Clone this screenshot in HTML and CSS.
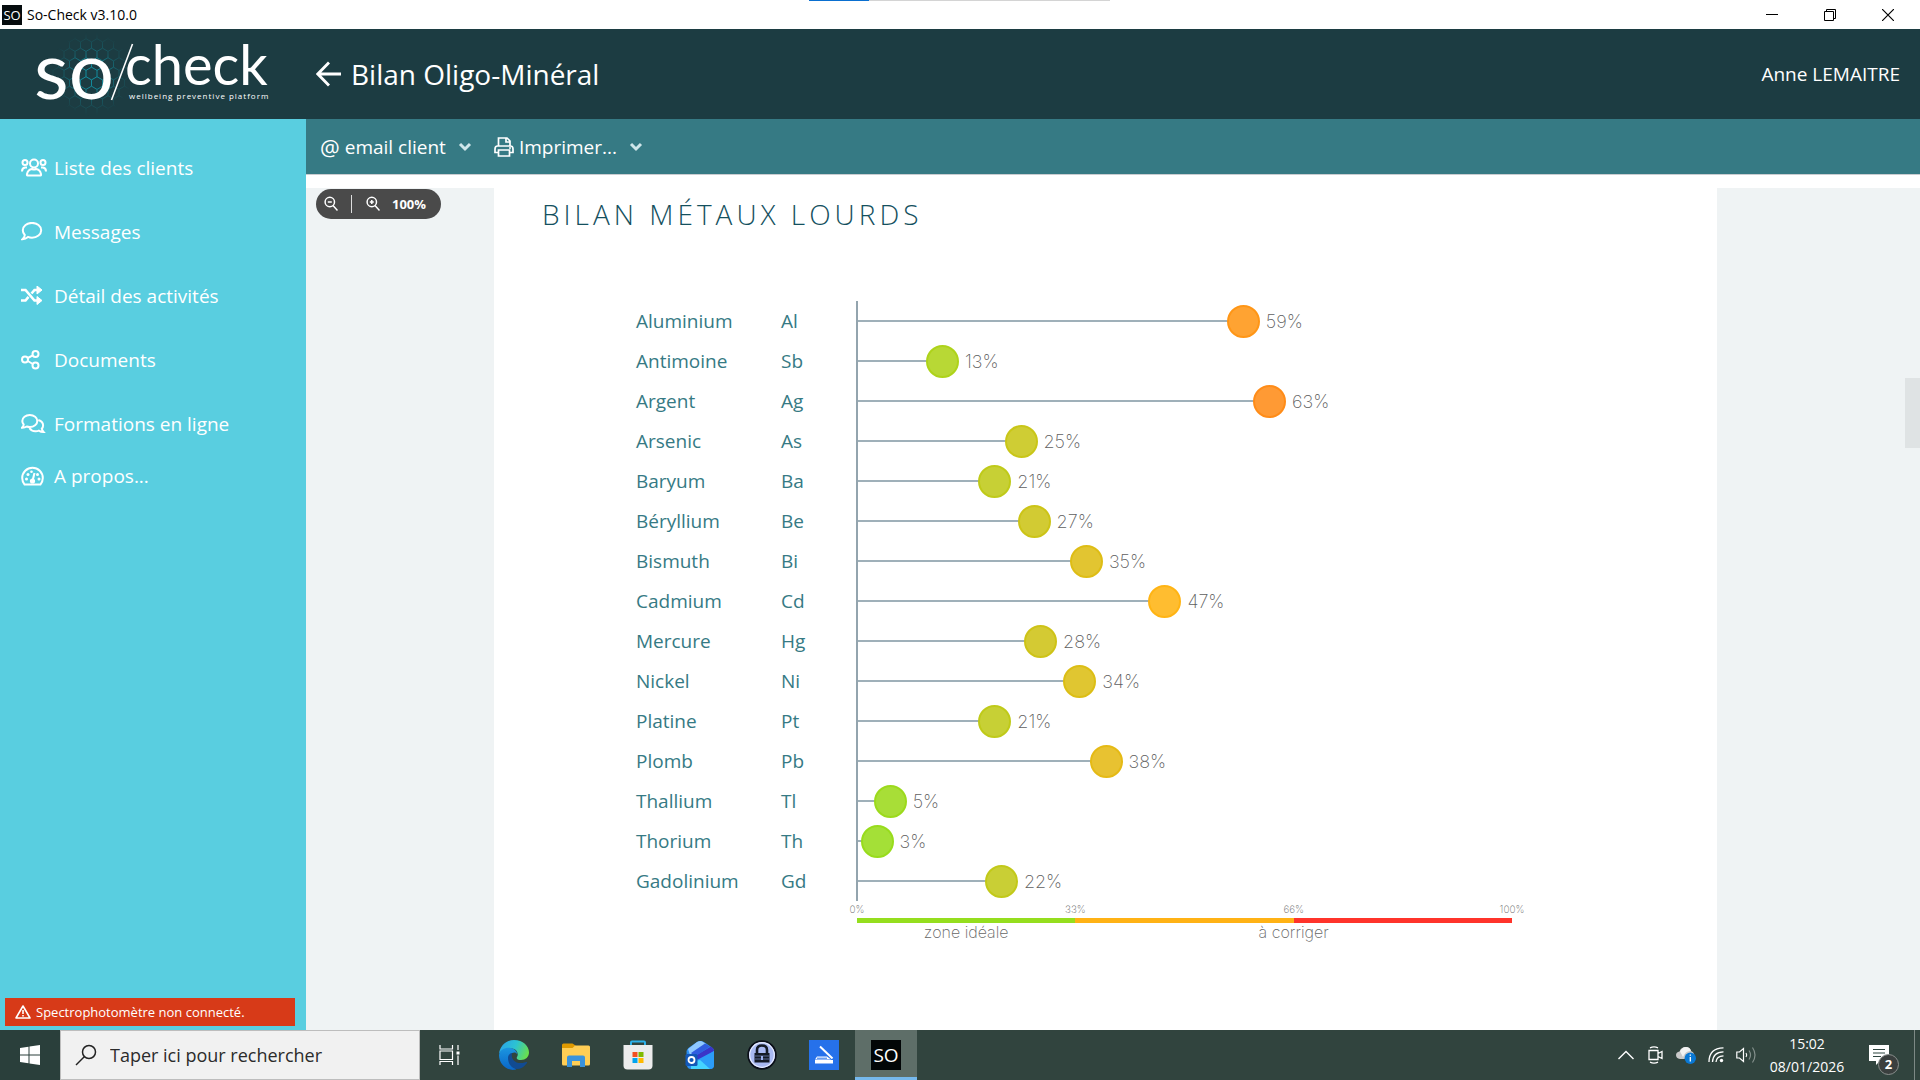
FILE: index.html
```
<!DOCTYPE html>
<html lang="fr">
<head>
<meta charset="utf-8">
<title>So-Check v3.10.0</title>
<link rel="stylesheet" href="styles.css">
</head>
<body>
<div class="titlebar">
  <span class="app-icon">SO</span>
  <span class="app-name">So-Check v3.10.0</span>
  <span class="load-strip"></span>
  <div class="window-buttons">
    <button type="button" aria-label="Réduire"><svg width="12" height="12" viewBox="0 0 12 12"><path d="M0 5.500h12" stroke="#000"/></svg></button>
    <button type="button" aria-label="Restaurer"><svg width="12" height="12" viewBox="0 0 12 12" fill="none" stroke="#000"><path d="M.5 2.500h9v9h-9zM2.500 2.500v-2h9v9h-2"/></svg></button>
    <button type="button" aria-label="Fermer"><svg width="12" height="12" viewBox="0 0 12 12"><path d="M0 0l12 12M12 0L0 12" stroke="#000" stroke-width="1.200"/></svg></button>
  </div>
</div>

<header class="header">
  <div class="brand">
    <svg width="260" height="90" viewBox="20 29 260 90" role="img" aria-label="so/check wellbeing preventive platform">
      <defs>
        <pattern id="hex" width="11" height="19" patternUnits="userSpaceOnUse" x="86" y="64">
          <path d="M5.500 0v3.200L0 6.400v6.300l5.500 3.200V19M5.500 3.200L11 6.400v6.300l-5.500 3.200" fill="none" stroke="#1294a6" stroke-width="1"/>
        </pattern>
        <radialGradient id="fade"><stop offset="0" stop-color="#fff"/><stop offset=".35" stop-color="#fff" stop-opacity=".8"/><stop offset=".65" stop-color="#fff" stop-opacity=".3"/><stop offset="1" stop-color="#fff" stop-opacity="0"/></radialGradient>
        <mask id="glow"><circle cx="91" cy="74" r="42" fill="url(#fade)"/></mask>
      </defs>
      <rect x="49" y="32" width="84" height="84" fill="url(#hex)" mask="url(#glow)"/>
      <g fill="#fff" class="brand-text">
        <text x="34" y="99" font-size="80">so</text>
        <text x="125" y="85" font-size="56">check</text>
        <text x="129" y="99" font-size="8" class="tagline">wellbeing preventive platform</text>
      </g>
      <path d="M132.500 44L111.500 100" stroke="#fff" stroke-width="1.600"/>
    </svg>
  </div>
  <button type="button" class="back" aria-label="Retour"><svg width="26" height="26" viewBox="0 0 26 26" fill="none" stroke="#fff" stroke-width="2.800"><path d="M25 13H2M13 1.500L1.800 13 13 24.500"/></svg></button>
  <h1>Bilan Oligo-Minéral</h1>
  <span class="user">Anne LEMAITRE</span>
</header>

<div class="body">
  <aside class="sidebar">
    <nav>
      <a href="#clients"><svg viewBox="0 0 26 20" width="26" height="20" class="ic"><circle cx="13" cy="5.500" r="4"/><circle cx="4" cy="4.500" r="2.500"/><circle cx="22" cy="4.500" r="2.500"/><path d="M6.500 17.500q-.8 0-.5-1.500 1-4.500 5-5 2 1 4 0 4 .5 5 5 .3 1.500-.5 1.500zM1 13.500q0-3.500 3-4h2M25 13.500q0-3.500-3-4h-2"/></svg>Liste des clients</a>
      <a href="#messages"><svg viewBox="0 0 26 20" width="26" height="20" class="ic"><path d="M1.500 17.200q2.200-2 2.300-4.200-2-2-2-4.700C1.800 4 6 .9 11 .9s9.200 3.200 9.200 7.400-4.200 7.400-9.200 7.400q-2.300 0-4-.8-2.500 2.200-5.500 2.300z"/></svg>Messages</a>
      <a href="#activites"><svg viewBox="0 0 26 20" width="26" height="20" class="ic"><path d="M0 4h4.500l9 10.500H17M0 14.500h4.500l3-3.600M10.500 7.500l3-3.500H17" stroke-width="2.600"/><path d="M16 0l5 4-5 4zM16 10.500l5 4-5 4z" fill="#fff" stroke-width="1"/></svg>Détail des activités</a>
      <a href="#documents"><svg viewBox="0 0 26 20" width="26" height="20" class="ic"><circle cx="4" cy="9.500" r="3"/><circle cx="14.500" cy="4" r="3"/><circle cx="14.500" cy="15.500" r="3"/><path d="M6.800 8l5-2.600M6.800 11l5 3"/></svg>Documents</a>
      <a href="#formations"><svg viewBox="0 0 26 20" width="26" height="20" class="ic"><path d="M1 13.700q1.600-1.600 1.700-3.200-1.400-1.500-1.400-3.500c0-3.400 3.300-6 7.500-6s7.500 2.600 7.500 6-3.300 6-7.500 6q-1.600 0-3-.5-2 1.300-4.800 1.200z"/><path d="M8.500 14q2 3.500 6.500 3.200 1.400 0 2.800-.6 2 1.400 4.700 1.400-1.500-1.600-1.700-3.300 1.300-1.400 1.300-3.200 0-4-4.800-5.500"/></svg>Formations en ligne</a>
      <a href="#apropos" class="last"><svg viewBox="0 0 26 20" width="26" height="20" class="ic"><path d="M3.500 18.500Q1.200 15.500 1.200 12a10.300 10.300 0 0 1 20.600 0q0 3.500-2.300 6.500z"/><path d="M11.500 15l2-8"/><g fill="#fff" stroke="none"><circle cx="11.500" cy="15" r="2.600"/><circle cx="5.500" cy="13" r="1.500"/><circle cx="7" cy="8.500" r="1.500"/><circle cx="10.500" cy="5.800" r="1.300"/><circle cx="16.500" cy="8.500" r="1.500"/><circle cx="18" cy="13" r="1.500"/></g></svg>A propos...</a>
    </nav>
    <div class="alert" role="alert"><svg width="16" height="14" viewBox="0 0 16 14" fill="none" stroke="#fff" stroke-width="1.600"><path d="M8 1L15 13H1zM8 5v4M8 10v1.600" stroke-linejoin="round"/></svg>Spectrophotomètre non connecté.</div>
  </aside>

  <main class="main">
    <div class="toolbar">
      <button type="button"><span class="at">@</span>email client<svg width="14" height="10" viewBox="0 0 14 10" class="caret"><path d="M2 2l5 5 5-5"/></svg></button>
      <button type="button"><svg width="20" height="20" viewBox="0 0 20 20" fill="none" stroke="#fff" stroke-width="1.700"><path d="M4.500 9V1h8.500l3 3v5M12 1v4h4M4 15.500H1V12q0-3 2.500-3h13q2.500 0 2.500 3v3.500h-3M4.500 13h11v6h-11zM15 11h2"/></svg>Imprimer...<svg width="14" height="10" viewBox="0 0 14 10" class="caret"><path d="M2 2l5 5 5-5"/></svg></button>
    </div>
    <div class="viewer">
      <div class="zoom">
        <button type="button" aria-label="Zoom arrière"><svg width="14" height="16" viewBox="0 0 14 16"><circle cx="5.800" cy="6" r="4.700"/><path d="M3.800 6h4M9 9.500l4.500 5"/></svg></button>
        <span class="sep"></span>
        <button type="button" aria-label="Zoom avant"><svg width="14" height="16" viewBox="0 0 14 16"><circle cx="5.800" cy="6" r="4.700"/><path d="M3.800 6h4M5.800 4v4M9 9.500l4.500 5"/></svg></button>
        <span class="level">100%</span>
      </div>
      <div class="scroller">
        <article class="paper">
          <h2>BILAN MÉTAUX LOURDS</h2>
          <div class="chart">
            <table>
              <tbody>
                <tr><th scope="row">Aluminium</th><td>Al</td><td class="plot"><div class="bar" style="--v:59;--c:#ff9616"><i></i><b></b><span>59%</span></div></td></tr>
                <tr><th scope="row">Antimoine</th><td>Sb</td><td class="plot"><div class="bar" style="--v:13;--c:#aed31a"><i></i><b></b><span>13%</span></div></td></tr>
                <tr><th scope="row">Argent</th><td>Ag</td><td class="plot"><div class="bar" style="--v:63;--c:#ff8c18"><i></i><b></b><span>63%</span></div></td></tr>
                <tr><th scope="row">Arsenic</th><td>As</td><td class="plot"><div class="bar" style="--v:25;--c:#c9c618"><i></i><b></b><span>25%</span></div></td></tr>
                <tr><th scope="row">Baryum</th><td>Ba</td><td class="plot"><div class="bar" style="--v:21;--c:#bfca19"><i></i><b></b><span>21%</span></div></td></tr>
                <tr><th scope="row">Béryllium</th><td>Be</td><td class="plot"><div class="bar" style="--v:27;--c:#ccc417"><i></i><b></b><span>27%</span></div></td></tr>
                <tr><th scope="row">Bismuth</th><td>Bi</td><td class="plot"><div class="bar" style="--v:35;--c:#debd15"><i></i><b></b><span>35%</span></div></td></tr>
                <tr><th scope="row">Cadmium</th><td>Cd</td><td class="plot"><div class="bar" style="--v:47;--c:#ffb414"><i></i><b></b><span>47%</span></div></td></tr>
                <tr><th scope="row">Mercure</th><td>Hg</td><td class="plot"><div class="bar" style="--v:28;--c:#cec317"><i></i><b></b><span>28%</span></div></td></tr>
                <tr><th scope="row">Nickel</th><td>Ni</td><td class="plot"><div class="bar" style="--v:34;--c:#dcbe15"><i></i><b></b><span>34%</span></div></td></tr>
                <tr><th scope="row">Platine</th><td>Pt</td><td class="plot"><div class="bar" style="--v:21;--c:#bfca19"><i></i><b></b><span>21%</span></div></td></tr>
                <tr><th scope="row">Plomb</th><td>Pb</td><td class="plot"><div class="bar" style="--v:38;--c:#e5ba15"><i></i><b></b><span>38%</span></div></td></tr>
                <tr><th scope="row">Thallium</th><td>Tl</td><td class="plot"><div class="bar" style="--v:5;--c:#9cda1c"><i></i><b></b><span>5%</span></div></td></tr>
                <tr><th scope="row">Thorium</th><td>Th</td><td class="plot"><div class="bar" style="--v:3;--c:#98dc1c"><i></i><b></b><span>3%</span></div></td></tr>
                <tr><th scope="row">Gadolinium</th><td>Gd</td><td class="plot"><div class="bar" style="--v:22;--c:#c2c919"><i></i><b></b><span>22%</span></div></td></tr>
              </tbody>
            </table>
            <div class="scale">
              <div class="ticks"><span>0%</span><span>33%</span><span>66%</span><span>100%</span></div>
              <div class="zones"><i class="good"></i><i class="mid"></i><i class="bad"></i></div>
              <div class="captions"><span>zone idéale</span><span class="fix">à corriger</span></div>
            </div>
          </div>
        </article>
        <div class="scrollbar"><div class="thumb"></div></div>
      </div>
    </div>
  </main>
</div>

<footer class="taskbar">
  <button type="button" class="start" aria-label="Démarrer"><svg width="20" height="20" viewBox="0 0 20 20" fill="#fff"><path d="M0 3l8.500-1.300v7.800H0zM9.500 1.500L20 0v9.500H9.500zM0 10.500h8.500v7.800L0 17zM9.500 10.500H20V20L9.500 18.500z"/></svg></button>
  <label class="search"><svg width="22" height="22" viewBox="0 0 22 22" fill="none" stroke="#222" stroke-width="1.500"><circle cx="14" cy="8" r="6.500"/><path d="M9.500 12.500L1 21"/></svg><input type="text" placeholder="Taper ici pour rechercher" aria-label="Taper ici pour rechercher"></label>
  <button type="button" class="taskview" aria-label="Affichage des tâches"><svg width="22" height="20" viewBox="0 0 22 20" fill="none" stroke="#fff" stroke-width="1.200"><path d="M1 0v4h12.500V0M1 20v-3.500h12.500V20M1 6h12.500v8.500H1zM19 0v5M19 10.500V20"/><path d="M17.500 6.500h3v3h-3z" fill="#fff" stroke="none"/></svg></button>
  <button type="button" class="app" aria-label="Edge"><svg width="30" height="30" viewBox="0 0 30 30">
    <defs><linearGradient id="e1" x1="0" x2="1" y1=".3" y2=".6"><stop offset="0" stop-color="#2aa3e8"/><stop offset=".5" stop-color="#2cc3d2"/><stop offset="1" stop-color="#6be04a"/></linearGradient><linearGradient id="e2" x1="0" x2="0" y1="0" y2="1"><stop offset="0" stop-color="#1b95e0"/><stop offset="1" stop-color="#0a66c8"/></linearGradient></defs>
    <path d="M0 14C1 5 8 0 15 0c9 0 15 6 15 12.500 0 4.500-3.500 7.500-8 7.500-3.500 0-5-1.500-4-3 2-3 0-8-5-8.500C7 8 2 10 0 14z" fill="url(#e1)"/>
    <path d="M0 15C1 9 7 7 12 8c4 1 6 3.500 6.200 6-1-1.500-3-2-5-1-4 2.500-4 10 3 15.500C19 30 15 30 14 30 6 29.500 0 23 0 15z" fill="url(#e2)"/>
    <path d="M9 18c0-3 2-5 4.300-5-1.500 3 0 10 8.700 10 3 0 5-1.500 6-1 .7.500-1.500 3.500-5 5.800C15 32 9 25 9 18z" fill="#114b92"/></svg></button>
  <button type="button" class="app" aria-label="Explorateur de fichiers"><svg width="28" height="24" viewBox="0 0 28 24"><path d="M0 2q0-1.500 1.500-1.500h9l3 2-2.500 3H0z" fill="#e09a00"/><path d="M0 5h10.500L13 2.500h13.500q1.500 0 1.500 1.500v17q0 1.500-1.500 1.500h-25Q0 22.500 0 21z" fill="#ffce55"/><path d="M5 24V14.500q0-2 2-2h14q2 0 2 2V24h-5v-6h-8v6z" fill="#3a93dc"/></svg></button>
  <button type="button" class="app" aria-label="Microsoft Store"><svg width="30" height="30" viewBox="0 0 30 30"><path d="M8 7V2.500Q8 1.500 9 1.500h12q1 0 1 1V7" fill="none" stroke="#2cb1ea" stroke-width="2"/><path d="M.5 5h29v20.500q0 4-4 4h-21q-4 0-4-4z" fill="#ececec"/><path d="M9.500 12h5v5h-5z" fill="#f25022"/><path d="M15.500 12h5v5h-5z" fill="#7fba00"/><path d="M9.500 18h5v5h-5z" fill="#00a4ef"/><path d="M15.500 18h5v5h-5z" fill="#ffb900"/></svg></button>
  <button type="button" class="app" aria-label="Outlook"><svg width="30" height="30" viewBox="0 0 30 30"><path d="M1.500 11Q2 9 4 7.500L12 2q3.500-2 7 0l8 5.500q2 1.500 2 3V25q0 4-4 4H6q-4 0-4-4z" fill="#2b8df0"/><path d="M3 9l9-7q3.500-2 6 0L21 4 5 15z" fill="#8fc8ff"/><path d="M10 16L26 6.500q3 2 3 4.500L14 21z" fill="#3a35c8"/><path d="M6 13L20 3.500l5 3L10 16.500z" fill="#2f5de0"/><path d="M12 20l17-9v14q0 4-4 4H9z" fill="#2c9df8"/><path d="M6 22l9-2 10 9H6z" fill="#45d4ff"/><path d="M2 14h9q1.500 0 1.500 1.500v9q0 1.500-1.500 1.500H2q-1.500 0-1.500-1.500v-9Q.5 14 2 14z" fill="#1258b8"/><circle cx="6.500" cy="20" r="3" fill="none" stroke="#fff" stroke-width="1.800"/></svg></button>
  <button type="button" class="app" aria-label="KeePass"><svg width="30" height="30" viewBox="0 0 30 30"><circle cx="15" cy="15" r="13.800" fill="#a9b9f2" stroke="#0b0f18" stroke-width="1.800"/><circle cx="15" cy="15" r="12.300" fill="none" stroke="#e6ebff" stroke-width="1.200"/><path d="M10 14V10q0-4.500 5-4.500t5 4.500v4" fill="none" stroke="#141a26" stroke-width="2.600"/><path d="M7.500 13h15v9.500h-15z" fill="#141a26"/><path d="M7.500 16h15M7.500 19h15" stroke="#5b6a96"/><path d="M14 16h2v4h-2z" fill="#9db0f0"/></svg></button>
  <button type="button" class="app" aria-label="Scanner"><svg width="30" height="30" viewBox="0 0 30 30"><path d="M0 0h30v30H0z" fill="#2671ea"/><path d="M11 6.500L23.500 18.500" stroke="#fff" stroke-width="2"/><path d="M6 20h18v3.500H6zM8 16.500h10l4 3H6z" fill="#fff"/><path d="M8 18.200h10" stroke="#2671ea"/></svg></button>
  <button type="button" class="app active" aria-label="So-Check"><span class="so-tile">SO</span></button>

  <div class="tray">
    <button type="button" aria-label="Icônes cachées"><svg width="16" height="10" viewBox="0 0 16 10" fill="none" stroke="#fff" stroke-width="1.400"><path d="M.5 9L8 1.500 15.500 9"/></svg></button>
    <button type="button" aria-label="Caméra"><svg width="16" height="18" viewBox="0 0 16 18" fill="none" stroke="#fff" stroke-width="1.300"><path d="M1 4.500h9v9H1zM10 7.500l4-2v7l-4-2M2 1.800q4-2 8 0M2 16.200q4 2 8 0"/></svg></button>
    <button type="button" aria-label="OneDrive"><svg width="20" height="18" viewBox="0 0 20 18"><path d="M4 13q-4-.5-4-4 0-3 3.500-3.500Q5 1 9.500 1T15 5q3 1 3 4t-3 4z" fill="#c9c9c9"/><path d="M4 5.500Q6 1 10 1q4 .2 5 4-5-1-8 6z" fill="#f2f2f2"/><circle cx="14.300" cy="12.300" r="5.700" fill="#0a78d4"/><path d="M14.300 11v4.500M14.300 8.500v1.300" stroke="#fff" stroke-width="1.300"/></svg></button>
    <button type="button" aria-label="Wi-Fi"><svg width="16" height="16" viewBox="0 0 16 16" fill="none" stroke="#fff" stroke-width="1.300"><path d="M1 15Q1 1 15.500.8M4.500 15Q5 5 15.500 4.800M8 15q.5-6 7.500-6.200"/><circle cx="13.500" cy="13.500" r="1.700" fill="#fff" stroke="none"/></svg></button>
    <button type="button" aria-label="Volume"><svg width="20" height="18" viewBox="0 0 20 18" fill="none" stroke="#fff" stroke-width="1.200"><path d="M.8 6H3.500L7.500 2.500v13L3.500 12H.8zM10 7q1.500 2 0 4"/><path d="M13 4.500q3 4.500 0 9M16.500 1.500q5 7.500 0 15" stroke="#84908c"/></svg></button>
    <div class="clock"><span>15:02</span><span>08/01/2026</span></div>
    <button type="button" class="notif" aria-label="Notifications"><svg width="20" height="20" viewBox="0 0 20 20"><path d="M0 0h20v16h-9l-4 4v-4H0z" fill="#fff"/><path d="M4 4.500h12M4 8h12M4 11.500h8" stroke="#2f4640" stroke-width="1.200"/></svg><span class="badge">2</span></button>
  </div>
</footer>
</body>
</html>
```
FILE: styles.css
```
* { box-sizing: border-box; }

body {
  margin: 0;
  height: 100vh;
  display: flex;
  flex-direction: column;
  background: #fff;
  font-family: "Open Sans", "Noto Sans", sans-serif;
}

button {
  border: 0;
  padding: 0;
  background: none;
  color: inherit;
  font: inherit;
}

svg { display: block; flex: none; }

/* Window title bar */
.titlebar {
  position: relative;
  flex: none;
  display: flex;
  align-items: center;
  height: 29px;
  padding-left: 2px;
  font-size: 14px;
  color: #000;
}
.app-icon {
  width: 20px;
  height: 20px;
  margin-right: 5px;
  background: #060c0e;
  color: #fff;
  font-size: 13px;
  line-height: 20px;
  text-align: center;
}
.load-strip {
  position: absolute;
  top: 0;
  left: 809px;
  width: 301px;
  height: 1px;
  background: linear-gradient(90deg, #0a6fd0 60px, #d4d4d4 60px);
}
.window-buttons { display: flex; margin-left: auto; padding-right: 3px; }
.window-buttons button { width: 58px; height: 29px; display: grid; place-items: center; }

/* Header */
.header {
  flex: none;
  display: flex;
  align-items: center;
  height: 90px;
  padding-right: 20px;
  background: #1c3c42;
  color: #fff;
}
.brand { width: 316px; padding-left: 20px; }
.brand-text { font-family: Lato, sans-serif; }
.tagline { font-family: "Open Sans", sans-serif; letter-spacing: 1px; }
.header h1 { margin: 0 0 0 9px; font-size: 28px; font-weight: 400; line-height: 40px; }
.user { margin-left: auto; font-size: 19px; }

/* Body */
.body { flex: 1; min-height: 0; display: flex; }

.sidebar {
  flex: none;
  width: 306px;
  display: flex;
  flex-direction: column;
  justify-content: space-between;
  padding: 17px 11px 4px 5px;
  background: #59cee0;
  color: #fff;
}
.sidebar nav { display: flex; flex-direction: column; }
.sidebar a {
  display: flex;
  align-items: center;
  gap: 7px;
  height: 64px;
  padding-left: 16px;
  color: #fff;
  font-size: 19px;
  text-decoration: none;
}
.sidebar a.last { height: 40px; }
.ic { fill: none; stroke: #fff; stroke-width: 2; }
.alert {
  display: flex;
  align-items: center;
  gap: 5px;
  height: 28px;
  padding-left: 10px;
  background: #d73a18;
  font-size: 13px;
}

.main { flex: 1; min-width: 0; display: flex; flex-direction: column; }
.toolbar {
  flex: none;
  display: flex;
  align-items: center;
  gap: 22px;
  height: 56px;
  padding-left: 14px;
  background: #367a84;
  color: #fff;
  font-size: 19px;
  border-bottom: 1px solid #c9ccd0;
}
.toolbar button { display: flex; align-items: center; gap: 5px; }
.at { font-size: 22px; line-height: 26px; }
.caret { margin-left: 7px; fill: none; stroke: #cfe6ea; stroke-width: 3; }

/* Document viewer */
.viewer { position: relative; flex: 1; min-height: 0; display: flex; padding-top: 13px; }
.scroller { flex: 1; display: flex; min-height: 0; overflow: hidden; background: #eff3f4; }
.zoom {
  position: absolute;
  top: 14px;
  left: 10px;
  display: flex;
  align-items: center;
  height: 30px;
  padding: 0 15px 0 8px;
  border-radius: 15px;
  background: #4a4a4a;
  color: #fff;
  font-size: 13px;
  font-weight: 700;
}
.zoom svg { fill: none; stroke: #fff; stroke-width: 1.5px; }
.sep { width: 1px; height: 18px; margin: 0 14px 0 13px; background: #ddd; }
.level { margin-left: 12px; }

.paper {
  flex: 0 1 1223px;
  margin: 0 auto;
  padding: 8px 0 0 48px;
  background: #fff;
}
.paper h2 {
  margin: 0;
  color: #14505e;
  font-size: 28px;
  font-weight: 300;
  line-height: 36px;
  letter-spacing: 4px;
}
.chart { margin: 69px 205px 0 94px; }
.chart table { width: 100%; border-collapse: collapse; table-layout: fixed; }
.chart th, .chart td {
  height: 40px;
  padding: 0;
  color: #367a84;
  font-size: 19px;
  font-weight: 400;
  text-align: left;
}
.chart th { width: 145px; }
.chart td { width: 76px; }
.chart td.plot { width: auto; border-left: 2px solid #93a4ae; }

/* Lollipop: stem, dot, value */
.bar { display: flex; align-items: center; }
.bar i { flex: none; width: calc(var(--v) * 1%); height: 2px; background: #9fb0b9; }
.bar b {
  flex: none;
  width: 33px;
  height: 33px;
  margin-left: -17px;
  border: 2px solid var(--c);
  border-radius: 50%;
  background: color-mix(in srgb, var(--c) 88%, #fff);
}
.bar span {
  margin-left: 6px;
  color: #5f5f5f;
  font-family: Inter, sans-serif;
  font-size: 18px;
  font-weight: 200;
}

.scale { margin-left: 221px; color: #666; font-family: Inter, sans-serif; font-weight: 200; }
.ticks { display: flex; justify-content: space-between; height: 17px; font-size: 10px; line-height: 16px; }
.ticks span { width: 0; display: flex; justify-content: center; }
.zones { display: flex; height: 5px; }
.zones i { flex: 1; }
.good { background: #95de1e; }
.mid { background: #ffb215; }
.bad { background: #ff342b; }
.captions { display: grid; grid-template-columns: repeat(3, 1fr); font-size: 16px; line-height: 18px; text-align: center; }
.captions .fix { grid-column: 2 / 4; }

.scrollbar { flex: none; width: 15px; padding-top: 190px; }
.thumb { height: 70px; background: #dfe3e4; }

/* Taskbar */
.taskbar {
  flex: none;
  display: flex;
  height: 50px;
  background: #31443e;
  color: #fff;
}
.taskbar button { display: grid; place-items: center; }
.start { width: 60px; background: #2a3f3b; }
.search {
  display: flex;
  align-items: center;
  gap: 13px;
  width: 360px;
  padding-left: 14px;
  border: 1px solid #bdbdbd;
  background: #f1f1f1;
}
.search input {
  flex: 1;
  min-width: 0;
  border: 0;
  padding: 0;
  outline: 0;
  background: none;
  color: #2b2b2b;
  font: 18px "Open Sans", "Noto Sans", sans-serif;
}
.search input::placeholder { color: #2b2b2b; opacity: 1; }
.taskview { width: 60px; margin-right: 3px; }
.app { width: 62px; }
.app.active { background: #5e6e68; border-bottom: 3px solid #76b9ed; padding-top: 3px; }
.so-tile {
  width: 30px;
  height: 30px;
  background: #020607;
  color: #fff;
  font-size: 19px;
  line-height: 30px;
}
.tray { display: flex; align-items: center; margin-left: auto; padding-right: 9px; border-right: 1px solid #7d8985; margin-right: 5px; }
.tray button { width: 30px; height: 50px; }
.clock {
  display: flex;
  flex-direction: column;
  align-items: center;
  width: 92px;
  font-size: 14px;
  line-height: 23px;
}
.tray .notif { position: relative; width: 52px; }
.badge {
  position: absolute;
  left: 25px;
  top: 24px;
  width: 21px;
  height: 21px;
  border: 1px solid #8a8f8d;
  border-radius: 50%;
  background: #3a3f3e;
  font-size: 13px;
  font-weight: 700;
  line-height: 19px;
  text-align: center;
}
```
